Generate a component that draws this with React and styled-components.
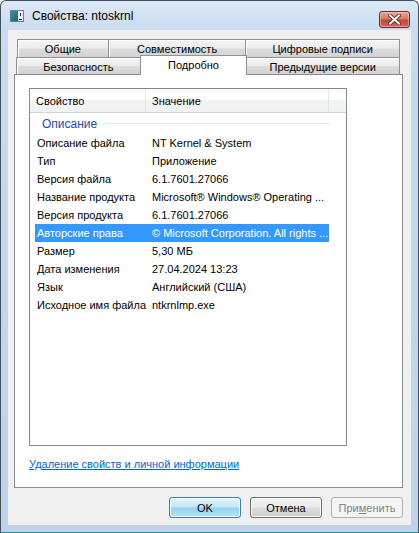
import React from "react";
import styled, { createGlobalStyle } from "styled-components";

const Global = createGlobalStyle`
  html, body { margin: 0; padding: 0; background: #ffffff; }
  body {
    font-family: "Liberation Sans", Arial, sans-serif;
    font-size: 11px;
    color: #000;
  }
  * { box-sizing: border-box; }
`;

const Window = styled.div`
  width: 419px;
  height: 533px;
  display: flex;
  flex-direction: column;
  border: 1px solid #44505e;
  border-bottom-color: #2b8a8a;
  border-radius: 6px 6px 0 0;
  background: linear-gradient(180deg, #dde9f7 0px, #c8dbf0 30px, #bcd3eb 100%);
  overflow: hidden;
`;

const TitleBar = styled.div`
  height: 29px;
  display: flex;
  align-items: center;
  padding: 0 8px 0 9px;
`;

const Title = styled.div`
  flex: 1;
  margin-left: 8px;
  font-size: 12px;
  color: #000;
`;

const CloseButton = styled.div`
  width: 31px;
  height: 17px;
  margin-top: 7px;
  border: 1px solid #6b2a22;
  border-radius: 3px;
  background: linear-gradient(180deg, #e6a89d 0%, #d4786a 45%, #c0483a 55%, #cf6a58 100%);
  box-shadow: inset 0 0 0 1px rgba(255, 220, 210, 0.45);
  display: flex;
  align-items: center;
  justify-content: center;
`;

const Client = styled.div`
  flex: 1;
  margin: 0 7px 7px 7px;
  background: #f0f0f0;
  display: flex;
  flex-direction: column;
  padding: 9px 8px 7px 6px;
`;

const TabStrip = styled.div`
  display: flex;
  flex-direction: column;
  margin-left: 2px;
  margin-right: 3px;
`;

const TabRow = styled.div`
  display: flex;
  height: ${(p) => p.$h}px;
  margin-left: ${(p) => p.$indent || 0}px;
  position: relative;
  z-index: ${(p) => p.$z || 1};
`;

const Tab = styled.div`
  width: ${(p) => p.$w}px;
  height: 100%;
  margin-left: -1px;
  &:first-child { margin-left: 0; }
  border: 1px solid #8e9197;
  border-bottom: none;
  background: linear-gradient(180deg, #f4f4f4 0%, #ececec 48%, #dddddd 52%, #d3d3d3 100%);
  box-shadow: inset 1px 1px 0 #ffffff;
  display: flex;
  align-items: center;
  justify-content: center;
  padding-top: 1px;
  white-space: nowrap;
`;

const ActiveTab = styled(Tab)`
  position: relative;
  height: calc(100% + 3px);
  margin-top: -2px;
  background: #ffffff;
  box-shadow: none;
  align-items: flex-start;
  padding-top: 3px;
  z-index: 3;
  margin-left: -1px;
  margin-right: -1px;
  width: ${(p) => p.$w + 1}px;
`;

const Panel = styled.div`
  flex: 1;
  background: #ffffff;
  border: 1px solid #898c95;
  display: flex;
  flex-direction: column;
  padding: 13px 14px 0 14px;
  position: relative;
  z-index: 2;
`;

const List = styled.div`
  width: 318px;
  height: 358px;
  border: 1px solid #828790;
  display: flex;
  flex-direction: column;
`;

const Header = styled.div`
  display: flex;
  height: 24px;
  border-bottom: 1px solid #d5d5d5;
  background: linear-gradient(180deg, #ffffff 0%, #ffffff 45%, #f3f4f6 50%, #f1f2f4 100%);
`;

const HeaderCell = styled.div`
  width: ${(p) => (p.$w ? `${p.$w}px` : "auto")};
  flex: ${(p) => (p.$w ? "none" : 1)};
  border-right: ${(p) => (p.$w ? "1px solid #e3e5e8" : "none")};
  display: flex;
  align-items: center;
  padding-left: 6px;
`;

const Group = styled.div`
  height: 21px;
  display: flex;
  align-items: center;
  padding: 0 16px 0 12px;
  gap: 8px;
  font-size: 12px;
  color: #1f4aa8;
`;

const GroupLine = styled.div`
  flex: 1;
  height: 1px;
  background: #e2e6ee;
  margin-top: -1px;
`;

const Row = styled.div`
  display: grid;
  grid-template-columns: 117px 1fr;
  height: 18px;
  align-items: center;
  margin: 0 17px 0 5px;
  background: ${(p) => (p.$selected ? "#3399ff" : "transparent")};
  color: ${(p) => (p.$selected ? "#ffffff" : "#000000")};
  white-space: nowrap;
`;

const Cell = styled.div`
  padding-left: ${(p) => (p.$first ? 2 : 0)}px;
  overflow: hidden;
`;

const Link = styled.a`
  margin-top: 12px;
  color: #0066cc;
  text-decoration: underline;
  cursor: pointer;
  align-self: flex-start;
`;

const Buttons = styled.div`
  display: flex;
  justify-content: flex-end;
  gap: 9px;
  margin-top: 9px;
`;

const Button = styled.div`
  width: 72px;
  height: 21px;
  border-radius: 3px;
  display: flex;
  align-items: center;
  justify-content: center;
  border: 1px solid ${(p) => (p.$default ? "#3c7fb1" : p.$disabled ? "#adb2b5" : "#707070")};
  color: ${(p) => (p.$disabled ? "#838383" : "#000")};
  background: ${(p) =>
    p.$default
      ? "linear-gradient(180deg, #e5f4fc 0%, #c4e5f6 48%, #98d1ef 52%, #b7e0f5 100%)"
      : p.$disabled
      ? "#f4f4f4"
      : "linear-gradient(180deg, #f2f2f2 0%, #ebebeb 48%, #dddddd 52%, #cfcfcf 100%)"};
  box-shadow: inset 0 0 0 1px ${(p) => (p.$disabled ? "#f4f4f4" : "rgba(255,255,255,0.8)")};
`;

const Access = styled.span`
  text-decoration: underline;
`;

function AppIcon() {
  return (
    <svg width="14" height="12" viewBox="0 0 14 12">
      <rect x="0.5" y="0.5" width="13" height="11" fill="#ffffff" stroke="#6d7a88" />
      <defs>
        <linearGradient id="ic" x1="0" y1="0" x2="1" y2="1">
          <stop offset="0" stopColor="#2f9a88" />
          <stop offset="1" stopColor="#1e5f8a" />
        </linearGradient>
      </defs>
      <rect x="1" y="1" width="7" height="10" fill="url(#ic)" />
      <rect x="8" y="1" width="5" height="10" fill="#e8eef3" />
      <rect x="10" y="3" width="1" height="3" fill="#222" />
      <rect x="9" y="9" width="3" height="1" fill="#222" />
    </svg>
  );
}

function CloseGlyph() {
  return (
    <svg width="13" height="11" viewBox="0 0 13 11">
      <path d="M2 1.5 L11 9.5 M11 1.5 L2 9.5" stroke="#5a2019" strokeWidth="3.6" strokeLinecap="square" />
      <path d="M2 1.5 L11 9.5 M11 1.5 L2 9.5" stroke="#ffffff" strokeWidth="2" strokeLinecap="square" />
    </svg>
  );
}

const rows = [
  ["Описание файла", "NT Kernel & System"],
  ["Тип", "Приложение"],
  ["Версия файла", "6.1.7601.27066"],
  ["Название продукта", "Microsoft® Windows® Operating ..."],
  ["Версия продукта", "6.1.7601.27066"],
  ["Авторские права", "© Microsoft Corporation. All rights ...", true],
  ["Размер", "5,30 МБ"],
  ["Дата изменения", "27.04.2024 13:23"],
  ["Язык", "Английский (США)"],
  ["Исходное имя файла", "ntkrnlmp.exe"],
];

export default function App() {
  return (
    <>
      <Global />
      <Window>
        <TitleBar>
          <AppIcon />
          <Title>Свойства: ntoskrnl</Title>
          <CloseButton>
            <CloseGlyph />
          </CloseButton>
        </TitleBar>
        <Client>
          <TabStrip>
            <TabRow $h={18} $indent={1}>
              <Tab $w={92}>Общие</Tab>
              <Tab $w={139}>Совместимость</Tab>
              <Tab $w={155}>Цифровые подписи</Tab>
            </TabRow>
            <TabRow $h={17} $z={3}>
              <Tab $w={125}>Безопасность</Tab>
              <ActiveTab $w={107}>Подробно</ActiveTab>
              <Tab $w={155}>Предыдущие версии</Tab>
            </TabRow>
          </TabStrip>
          <Panel>
            <List>
              <Header>
                <HeaderCell $w={116}>Свойство</HeaderCell>
                <HeaderCell $w={183}>Значение</HeaderCell>
                <HeaderCell />
              </Header>
              <Group>
                Описание
                <GroupLine />
              </Group>
              {rows.map(([k, v, sel]) => (
                <Row key={k} $selected={sel}>
                  <Cell $first>{k}</Cell>
                  <Cell>{v}</Cell>
                </Row>
              ))}
            </List>
            <Link>Удаление свойств и личной информации</Link>
          </Panel>
          <Buttons>
            <Button $default>OK</Button>
            <Button>Отмена</Button>
            <Button $disabled>
              При<Access>м</Access>енить
            </Button>
          </Buttons>
        </Client>
      </Window>
    </>
  );
}
